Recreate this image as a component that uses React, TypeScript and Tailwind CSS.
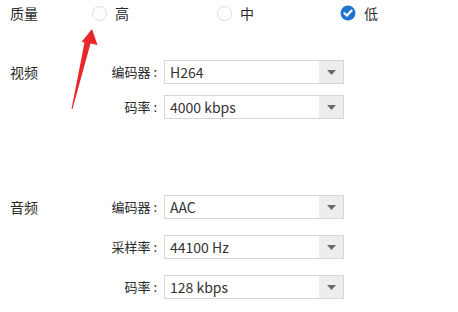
import React from "react";

const FONT = { fontFamily: '"Microsoft YaHei", "Noto Sans CJK SC", "Noto Sans", sans-serif' };

function Radio({ label, checked }: { label: string; checked?: boolean }) {
  return (
    <div className="flex items-center gap-[8px]">
      {checked ? (
        <svg width="16" height="16" viewBox="0 0 16 16" className="shrink-0">
          <circle cx="8" cy="8" r="7.5" fill="#1f74d2" />
          <path d="M4.4 8.2 L7 10.6 L11.6 5.6" stroke="#fff" strokeWidth="2.2" fill="none" strokeLinecap="round" strokeLinejoin="round" />
        </svg>
      ) : (
        <span className="block h-[15px] w-[15px] shrink-0 rounded-full border border-[#dcdcdc] bg-white" />
      )}
      <span className="text-[14px] text-[#2a2a2a]">{label}</span>
    </div>
  );
}

function Select({ label, value }: { label: string; value: string }) {
  return (
    <div className="flex items-center">
      <span className="w-[164px] pr-[7px] text-right text-[13px] text-[#2a2a2a]">{label} :</span>
      <div className="flex h-[24px] w-[180px] items-stretch border border-[#d6d6d6] bg-white">
        <span className="flex flex-1 items-center pl-[5px] text-[14px] text-[#333]">{value}</span>
        <span className="flex w-[24px] items-center justify-center bg-[#ededed]">
          <svg width="9" height="5" viewBox="0 0 9 5">
            <path d="M0 0 H9 L4.5 5 Z" fill="#6b6b6b" />
          </svg>
        </span>
      </div>
    </div>
  );
}

export default function App() {
  return (
    <div className="relative h-[312px] w-[458px] overflow-hidden bg-white" style={FONT}>
      <div className="flex h-[26px] items-center">
        <span className="w-[92px] pl-[10px] text-[14px] text-[#2a2a2a]">质量</span>
        <div className="w-[125px]">
          <Radio label="高" />
        </div>
        <div className="w-[123px]">
          <Radio label="中" />
        </div>
        <Radio label="低" checked />
      </div>

      <div className="relative mt-[34px] flex flex-col gap-[11px]">
        <span className="absolute left-[10px] top-[2px] text-[14px] text-[#2a2a2a]">视频</span>
        <Select label="编码器" value="H264" />
        <Select label="码率" value="4000 kbps" />
      </div>

      <div className="relative mt-[76px] flex flex-col gap-[16px]">
        <span className="absolute left-[10px] top-[2px] text-[14px] text-[#2a2a2a]">音频</span>
        <Select label="编码器" value="AAC" />
        <Select label="采样率" value="44100 Hz" />
        <Select label="码率" value="128 kbps" />
      </div>

      <svg className="pointer-events-none absolute left-0 top-0" width="458" height="312" viewBox="0 0 458 312">
        <path d="M92 29 L97.5 45 L90.5 43.5 L72.5 109 L71.5 109 L84.5 42.5 L81.5 42 Z" fill="#e8262b" />
      </svg>
    </div>
  );
}
